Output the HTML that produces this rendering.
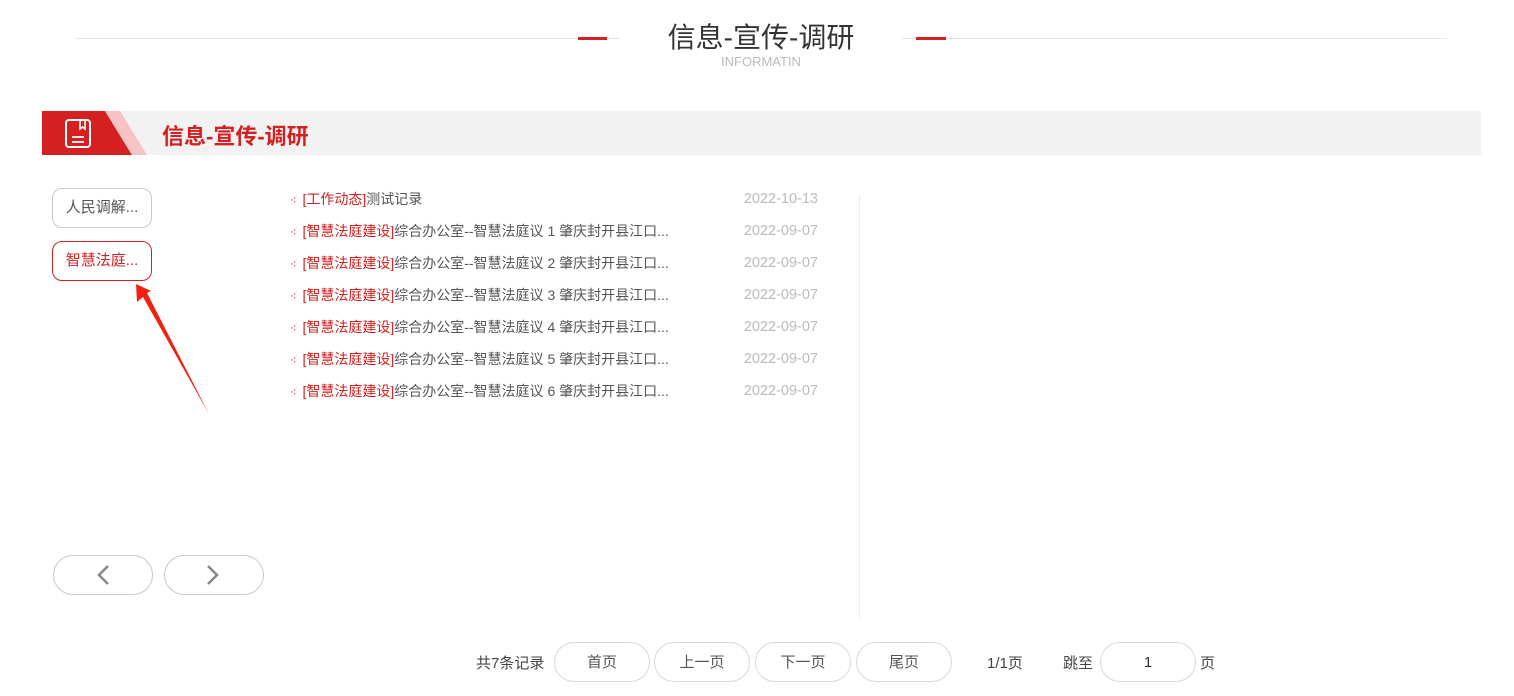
<!DOCTYPE html>
<html><head><meta charset="utf-8"><style>
*{margin:0;padding:0;box-sizing:border-box}
body{width:1514px;height:696px;background:#fff;font-family:"Liberation Sans","Noto Sans CJK SC",sans-serif;position:relative;overflow:hidden;color:#333}
.a{position:absolute}
.btn{position:absolute;border:1px solid #c8c8c8;border-radius:10px;font-size:15px;text-align:center;line-height:38px;color:#555}
.row{position:absolute;left:290px;font-size:14px;color:#555;white-space:nowrap;line-height:16px}
.row .d{color:#d42020;margin-right:6px;font-size:11px}
.row .r{color:#d42020}
.dt{position:absolute;left:718px;width:100px;text-align:right;font-size:14.5px;color:#bbb;line-height:16px}
.pg{position:absolute;top:642px;height:40px;width:96px;border:1px solid #d8d8d8;border-radius:20px;text-align:center;line-height:40px;font-size:15px;color:#555}
.tx{position:absolute;top:652px;font-size:15px;color:#444}
</style></head><body>
<div class="a" style="left:75px;top:38px;width:1372px;height:1px;background:#e6e6e6"></div>
<div class="a" style="left:578px;top:37px;width:29px;height:3px;background:#d42020"></div>
<div class="a" style="left:916px;top:37px;width:30px;height:3px;background:#d42020"></div>
<div class="a" style="left:620px;top:18px;width:282px;height:40px;background:#fff;text-align:center;font-size:28px;color:#333;line-height:40px">信息-宣传-调研</div>
<div class="a" style="left:661px;top:54px;width:200px;text-align:center;font-size:13px;color:#bbb">INFORMATIN</div>

<div class="a" style="left:42px;top:111px;width:1439px;height:44px;background:#f2f2f2"></div>
<svg class="a" style="left:42px;top:111px" width="110" height="44"><polygon points="0,0 63,0 90,44 0,44" fill="#d42020"/><polygon points="63,0 78,0 105,44 90,44" fill="#f6c4c4"/>
<rect x="24" y="9" width="24" height="27" rx="3" fill="none" stroke="#fff" stroke-width="2"/><path d="M38 9v9l2.5-2 2.5 2V9" fill="none" stroke="#fff" stroke-width="1.6"/><path d="M30 26h12M30 31h12" stroke="#fff" stroke-width="1.8"/></svg>
<div class="a" style="left:162px;top:119px;font-size:22px;font-weight:bold;color:#d42020">信息-宣传-调研</div>

<div class="btn" style="left:52px;top:188px;width:100px;height:40px">人民调解...</div>
<div class="btn" style="left:52px;top:241px;width:100px;height:40px;border-color:#d42020;color:#d42020">智慧法庭...</div>
<svg class="a" style="left:0;top:0" width="300" height="450"><polygon points="136,284 151,291 147,293 209,414 143,297 137,302" fill="#f02010"/></svg>
<div class="a" style="left:53px;top:555px;width:100px;height:40px;border:1px solid #c8c8c8;border-radius:20px"></div>
<div class="a" style="left:164px;top:555px;width:100px;height:40px;border:1px solid #c8c8c8;border-radius:20px"></div>
<svg class="a" style="left:0;top:0" width="300" height="600"><path d="M108 566l-9 9 9 9M208 566l9 9-9 9" fill="none" stroke="#888" stroke-width="2.5"/></svg>

<div class="row" style="top:191px"><span class="d">⁖</span><span class="r">[工作动态]</span>测试记录</div>
<div class="dt" style="top:191px">2022-10-13</div>
<div class="row" style="top:223px"><span class="d">⁖</span><span class="r">[智慧法庭建设]</span>综合办公室--智慧法庭议 1 肇庆封开县江口...</div>
<div class="dt" style="top:223px">2022-09-07</div>
<div class="row" style="top:255px"><span class="d">⁖</span><span class="r">[智慧法庭建设]</span>综合办公室--智慧法庭议 2 肇庆封开县江口...</div>
<div class="dt" style="top:255px">2022-09-07</div>
<div class="row" style="top:287px"><span class="d">⁖</span><span class="r">[智慧法庭建设]</span>综合办公室--智慧法庭议 3 肇庆封开县江口...</div>
<div class="dt" style="top:287px">2022-09-07</div>
<div class="row" style="top:319px"><span class="d">⁖</span><span class="r">[智慧法庭建设]</span>综合办公室--智慧法庭议 4 肇庆封开县江口...</div>
<div class="dt" style="top:319px">2022-09-07</div>
<div class="row" style="top:351px"><span class="d">⁖</span><span class="r">[智慧法庭建设]</span>综合办公室--智慧法庭议 5 肇庆封开县江口...</div>
<div class="dt" style="top:351px">2022-09-07</div>
<div class="row" style="top:383px"><span class="d">⁖</span><span class="r">[智慧法庭建设]</span>综合办公室--智慧法庭议 6 肇庆封开县江口...</div>
<div class="dt" style="top:383px">2022-09-07</div>
<div class="a" style="left:859px;top:195px;width:1px;height:425px;background:#eee"></div>

<div class="tx" style="left:476px">共7条记录</div>
<div class="pg" style="left:554px">首页</div>
<div class="pg" style="left:654px">上一页</div>
<div class="pg" style="left:755px">下一页</div>
<div class="pg" style="left:856px">尾页</div>
<div class="tx" style="left:987px">1/1页</div>
<div class="tx" style="left:1063px">跳至</div>
<div class="pg" style="left:1100px;width:96px;color:#333">1</div>
<div class="tx" style="left:1200px">页</div>
</body></html>
